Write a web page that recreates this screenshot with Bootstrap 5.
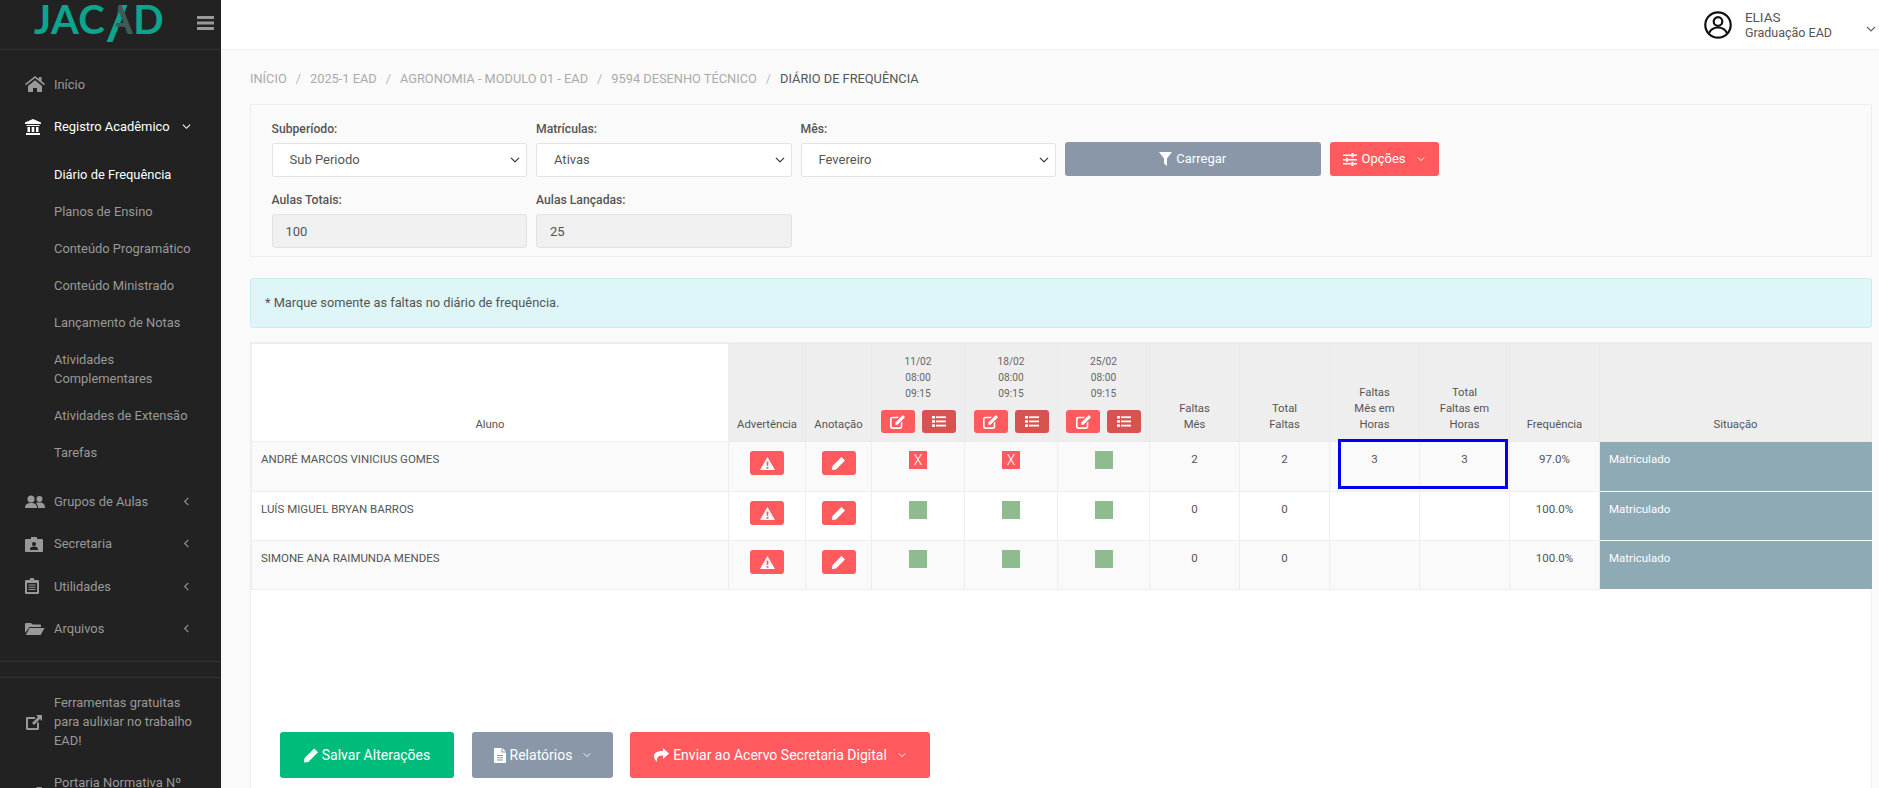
<!DOCTYPE html>
<html lang="pt-BR"><head><meta charset="utf-8"><title>Diário de Frequência</title>
<link href="https://cdn.jsdelivr.net/npm/bootstrap@5.3.0/dist/css/bootstrap.min.css" rel="stylesheet">
<style>
html,body{height:100%;overflow:hidden}
body{font-family:Roboto,"Liberation Sans",sans-serif;font-size:13px;color:#555;background:#fafafa}
.shell{height:788px;overflow:hidden}
.side{width:221px;flex:none;background:#222;color:#999;overflow:hidden;height:788px}
.side>*{flex:none}
.brand{height:50px;border-bottom:1px solid #333;position:relative}
.logo{position:absolute;left:34px;top:0;font-family:Lato,Roboto,sans-serif;font-weight:700;font-size:40px;line-height:38px;letter-spacing:.3px;color:#0aa58c;white-space:nowrap}
.logo-a{position:relative;display:inline-block}
.logo-glyph{color:#3f5a58;display:inline-block;clip-path:polygon(50% 0,100% 0,100% 100%,32% 100%)}
.logo-a::before{content:"";position:absolute;left:9px;top:5px;width:6px;height:37px;background:#0aa58c;transform:skewX(-22deg)}
.burger{position:absolute;left:197px;top:16px}
.menu-list{list-style:none;margin:0;padding:0}
.menu-main{padding-top:13px}
.mi{display:flex;align-items:center;height:37px;padding-left:25px;padding-right:10px;color:#999;white-space:nowrap;font-size:12.9px}
.mi.tall{height:42.4px}
.mi .ic{width:20px;height:16px;margin-right:9px;flex:none;fill:currentColor}
.mi .lbl{flex:1}
.mi.open{color:#fff;height:43px;margin-bottom:8px}
.sub{padding:0;margin:0 0 9px;list-style:none;font-size:12.9px}
.sub li{padding:9px 15px 9px 54px;line-height:19px;color:#999}
.sub li.now{color:#fff}
.chev{width:9px;height:9px;stroke:currentColor;fill:none;stroke-width:1.2;flex:none;margin-right:20px}
.side-hr{border-top:1px solid #333;height:16px;margin-top:11px}
.side-hr+.side-hr{margin-top:0}
.side-ext{padding:0 0 0 25px;display:flex;align-items:flex-start;color:#999;line-height:19px;margin-bottom:23px;font-size:12.9px}
.side-ext .ic{width:18px;height:18px;margin-right:11px;margin-top:20px;flex:none;fill:currentColor}
.side-ext .ic.ic-low{margin-top:12px}
.mainp{flex:1;min-width:0;height:788px;overflow:hidden}
.topb{height:50px;background:#fff;border-bottom:1px solid #eee;flex:none}
.usr{width:28px;height:28px;margin-right:13px}
.usr-n{line-height:16px;color:#555;font-size:13.5px}
.usr-n small{display:block;font-size:12.5px}
.topchev{width:10px;height:10px;stroke:#666;fill:none;stroke-width:1.2;margin-left:34px;margin-top:8px}
.topgap{width:3px}
.wrapc{padding:0 7px 0 29px}
.crumbs{height:54px;font-size:12.8px;color:#aaa;margin:0;padding:4px 0 0;align-items:center;--bs-breadcrumb-divider-color:#bbb;--bs-breadcrumb-item-active-color:#555;--bs-breadcrumb-margin-bottom:0;--bs-breadcrumb-item-padding-x:9px}
.crumbs .breadcrumb-item+.breadcrumb-item::before{color:#bbb}
.filter{background:#fafafa;border:1px solid #eee;padding:15px 16px 8px 16px;height:153px}
.frow{--bs-gutter-x:9px;--bs-gutter-y:0;margin-left:0}
.frow>div{width:264.5px;padding:0 4.5px}
.flab{font-size:12.2px;font-weight:500;color:#555;line-height:18px;margin-bottom:5px;display:block}
.fsel{height:34px;font-size:13px;color:#555;padding:0 26px 0 17px;border-color:#e3e3e3;border-radius:3px;background-size:12px 10px;background-position:right 5px center}
.finp{height:34px;font-size:13px;color:#555;padding:0 13px;border-color:#e3e3e3;border-radius:3px;background:#f0f0f0!important}
.r2{margin-top:14px}
.bt{display:inline-flex;align-items:center;justify-content:center;border:0;border-radius:3px;color:#fff;gap:4px;font-size:13px;padding:0;--bs-btn-color:#fff;--bs-btn-hover-color:#fff}
.bt svg.g{fill:#fff;flex:none}
.bt .c2{width:8px;height:8px;stroke:#fff;fill:none;stroke-width:1.2;margin-left:7px}
.b-red{background:#ff5b5f}.b-gray{background:#8a97a8}.b-grn{background:#00bc7a}.b-drk{background:#d85350}
.b-load{width:256px;height:34px;margin-bottom:1px}
.b-opt{width:109px;height:34px;margin-bottom:1px}
.note{height:50px;margin:21px 0 14px;padding:0 12px 0 14px;background:#dff6f8;border:1px solid #c8ecef;border-radius:3px;color:#555;display:flex;align-items:center;font-size:12.8px}
.tbox{background:#fff;border:1px solid #eee;border-bottom:0;height:446px;position:relative;width:1622px}
.dia{table-layout:fixed;width:1621px;border-collapse:collapse;font-size:12px;color:#555;margin:0}
.dia th,.dia td{border:1px solid #eee;font-weight:400}
.dia thead th{background:#eee;vertical-align:bottom;text-align:center;padding:0 4px 8px;line-height:16px;border-color:#e9e9e9;font-size:11.3px}
.dia thead th.wh{background:#fff;border-color:#eee}
.dia thead tr{height:98px}
.dia tbody td{vertical-align:top;padding:9px 9px 0;line-height:16px;text-align:center;font-size:11.5px}
.dia tbody td.nm{text-align:left}
.dia tbody tr:nth-child(odd) td{background:#fafafa}
.dia tbody tr:nth-child(1){height:50px}.dia tbody tr:nth-child(n+2){height:49px}
.dia tbody td.st,.dia tbody tr:nth-child(odd) td.st{background:#8daab5;color:#fff;text-align:left;border-color:#fff #8daab5}
.dts{font-size:10.2px;font-weight:400;color:#666;display:block;margin-bottom:8px}
.bts{display:flex;justify-content:center;gap:7px}
.sm1{width:34px;height:23px}
.rb{width:34px;height:24px}
.bx{display:inline-block;width:18px;height:18px;background:#8fbc8f;vertical-align:top}
.bx.f{background:#ff5b5f;color:#fff;line-height:18px;font-size:14px;font-weight:300}
.rel{position:relative}
.mark-blue{position:absolute;left:8px;top:-3px;width:170px;height:50px;border:3px solid #0000f0;pointer-events:none;z-index:2}
.foot{padding:142px 0 0 29px;gap:14px;display:flex}
.foot .bt{height:46px;font-size:14px;gap:4px}
.b-sv{width:174px}.b-rl{width:141px;margin-left:4px}.b-en{width:300px;margin-left:3px}
</style></head><body>
<div class="d-flex shell">
<aside class="side d-flex flex-column">
 <div class="brand">
  <div class="logo">JAC<span class="logo-a"><span class="logo-glyph">A</span></span>D</div>
  <svg class="burger" width="17" height="14" viewBox="0 0 17 14" fill="#999"><rect width="17" height="3"/><rect y="5.5" width="17" height="3"/><rect y="11" width="17" height="3"/></svg>
 </div>
 <ul class="menu-list menu-main">
  <li class="mi tall"><svg class="ic" viewBox="0 0 20 16"><path d="M10 0 0 8l1 1.300 9-7.300 9 7.300 1-1.300-3.500-2.900V1h-2.500v2L10 0zM3 10v6h5v-4h4v4h5v-6l-7-5.700z"/></svg><span class="lbl">Início</span></li>
  <li class="mi open"><svg class="ic" viewBox="0 0 20 16"><path d="M8 0 0 3.500V5h16V3.500zM1.500 6h13v1h-13zM2.500 8H5v5H2.500zM6.700 8h2.600v5H6.700zM11 8h2.500v5H11zM1 14h14v2H1z"/></svg><span class="lbl">Registro Acadêmico</span><svg class="chev" viewBox="0 0 10 10"><path d="M1 3l4 4 4-4"/></svg></li>
 </ul>
 <ul class="sub">
  <li class="now">Diário de Frequência</li><li>Planos de Ensino</li><li>Conteúdo Programático</li><li>Conteúdo Ministrado</li><li>Lançamento de Notas</li><li>Atividades Complementares</li><li>Atividades de Extensão</li><li>Tarefas</li>
 </ul>
 <ul class="menu-list">
  <li class="mi tall"><svg class="ic" viewBox="0 0 20 16"><circle cx="6" cy="5" r="3.500"/><circle cx="14.500" cy="5" r="3"/><path d="M0 14c0-3.500 2-5 6-5s6 1.500 6 5zM13 14c0-2-.5-3.500-2-5 1-.5 2-.5 3.500-.5 3.500 0 5.500 1.500 5.500 5.500z"/></svg><span class="lbl">Grupos de Aulas</span><svg class="chev" viewBox="0 0 10 10"><path d="M7 1 3 5l4 4"/></svg></li>
  <li class="mi tall"><svg class="ic" viewBox="0 0 20 16"><path fill-rule="evenodd" d="M1 3h5V1h6v2h5a1 1 0 0 1 1 1v11a1 1 0 0 1-1 1H1a1 1 0 0 1-1-1V4a1 1 0 0 1 1-1zm8 3a2 2 0 1 0 0 4 2 2 0 0 0 0-4zM5 14h8v-1c0-1.500-1.500-2.500-4-2.500S5 11.500 5 13z"/></svg><span class="lbl">Secretaria</span><svg class="chev" viewBox="0 0 10 10"><path d="M7 1 3 5l4 4"/></svg></li>
  <li class="mi tall"><svg class="ic" viewBox="0 0 20 16"><path fill-rule="evenodd" d="M1 2h3.500L5.500 0h3l1 2H13a1 1 0 0 1 1 1v12a1 1 0 0 1-1 1H1a1 1 0 0 1-1-1V3a1 1 0 0 1 1-1zm1 3v9h10V5zm1.500 1.500h7v1h-7zm0 2.300h7v1h-7zm0 2.300h7v1h-7z"/></svg><span class="lbl">Utilidades</span><svg class="chev" viewBox="0 0 10 10"><path d="M7 1 3 5l4 4"/></svg></li>
  <li class="mi tall"><svg class="ic" viewBox="0 0 20 16"><path d="M0 3a1 1 0 0 1 1-1h5l1.500 1.500H15a1 1 0 0 1 1 1V6H4.500L0 12zM4.500 7H19.500l-3.800 7H.8z"/></svg><span class="lbl">Arquivos</span><svg class="chev" viewBox="0 0 10 10"><path d="M7 1 3 5l4 4"/></svg></li>
 </ul>
 <div class="side-hr"></div><div class="side-hr"></div>
 <div class="side-ext"><svg class="ic" viewBox="0 0 18 18"><path d="M2 4h8v2H3v9h9V9.500h2V15.500a1.500 1.500 0 0 1-1.500 1.500h-10A1.500 1.500 0 0 1 1 15.500v-10A1.500 1.500 0 0 1 2 4zM11 2h6v6l-2-2-6 6-2-2 6-6z"/></svg><span>Ferramentas gratuitas<br>para aulixiar no trabalho<br>EAD!</span></div>
 <div class="side-ext"><svg class="ic ic-low" viewBox="0 0 18 18"><path d="M2 4h8v2H3v9h9V9.500h2V15.500a1.500 1.500 0 0 1-1.500 1.500h-10A1.500 1.500 0 0 1 1 15.500v-10A1.500 1.500 0 0 1 2 4zM11 2h6v6l-2-2-6 6-2-2 6-6z"/></svg><span>Portaria Normativa Nº</span></div>
</aside>
<main class="mainp d-flex flex-column">
 <header class="topb d-flex align-items-center justify-content-end">
  <svg class="usr" viewBox="0 0 28 28" fill="none" stroke="#111" stroke-width="2.200"><circle cx="14" cy="14" r="12.700"/><circle cx="14" cy="10.500" r="4.300"/><path d="M5 22c2-4 5-5.500 9-5.500s7 1.500 9 5.500"/></svg>
  <div class="usr-n">ELIAS<small>Graduação EAD</small></div>
  <svg class="topchev" viewBox="0 0 10 10"><path d="M1 3l4 4 4-4"/></svg>
  <span class="topgap"></span>
 </header>
 <div class="wrapc">
  <ol class="breadcrumb crumbs"><li class="breadcrumb-item">INÍCIO</li><li class="breadcrumb-item">2025-1 EAD</li><li class="breadcrumb-item">AGRONOMIA - MODULO 01 - EAD</li><li class="breadcrumb-item">9594 DESENHO TÉCNICO</li><li class="breadcrumb-item active">DIÁRIO DE FREQUÊNCIA</li></ol>
  <section class="filter">
   <div class="row frow">
    <div><label class="flab">Subperíodo:</label><select class="form-select fsel"><option>Sub Periodo</option></select></div>
    <div><label class="flab">Matrículas:</label><select class="form-select fsel"><option>Ativas</option></select></div>
    <div><label class="flab">Mês:</label><select class="form-select fsel"><option>Fevereiro</option></select></div>
    <div class="d-flex align-items-end"><button class="btn bt b-gray b-load"><svg class="g" width="13" height="14" viewBox="0 0 13 14"><path d="M0 0h13L8 6.500V14L5 11.500V6.500z"/></svg>Carregar</button></div>
    <div class="d-flex align-items-end"><button class="btn bt b-red b-opt"><svg class="g" width="14" height="13" viewBox="0 0 14 13"><path d="M0 1.500h8.500V0h2v1.500H14v1.500h-3.500v1.500h-2V3H0zM0 6h3V4.800h2V6h9v1.500H5v1.300H3V7.500H0zM0 10h8.500V8.800h2V10H14v1.500h-3.500V13h-2v-1.500H0z"/></svg>Opções<svg class="c2" viewBox="0 0 10 10"><path d="M1 3l4 4 4-4"/></svg></button></div>
   </div>
   <div class="row frow r2">
    <div><label class="flab">Aulas Totais:</label><input class="form-control finp" value="100" disabled></div>
    <div><label class="flab">Aulas Lançadas:</label><input class="form-control finp" value="25" disabled></div>
   </div>
  </section>
  <div class="note">* Marque somente as faltas no diário de frequência.</div>
  <div class="tbox">
   <table class="dia">
    <colgroup><col style="width:477px"><col style="width:77px"><col style="width:66px"><col style="width:93px"><col style="width:93px"><col style="width:92px"><col style="width:90px"><col style="width:90px"><col style="width:90px"><col style="width:90px"><col style="width:90px"><col></colgroup>
    <thead><tr>
     <th class="wh">Aluno</th><th>Advertência</th><th>Anotação</th>
     <th><span class="dts">11/02<br>08:00<br>09:15</span><div class="bts"><button class="btn bt b-red sm1"><svg class="g" width="15" height="14" viewBox="0 0 14 13"><path d="M2 1.500h6.500L7 3H2.500a1 1 0 0 0-1 1v6.500a1 1 0 0 0 1 1H9a1 1 0 0 0 1-1V7.500l1.500-1.500v5A2 2 0 0 1 9.500 13H2a2 2 0 0 1-2-2V3.500a2 2 0 0 1 2-2zM12 0l2 2-7 7H5V7z"/></svg></button><button class="btn bt b-drk sm1"><svg class="g" width="14" height="11" viewBox="0 0 14 11"><rect width="3" height="2.500"/><rect x="4" y=".3" width="10" height="1.800"/><rect y="4.200" width="3" height="2.500"/><rect x="4" y="4.500" width="10" height="1.800"/><rect y="8.400" width="3" height="2.500"/><rect x="4" y="8.700" width="10" height="1.800"/></svg></button></div></th>
     <th><span class="dts">18/02<br>08:00<br>09:15</span><div class="bts"><button class="btn bt b-red sm1"><svg class="g" width="15" height="14" viewBox="0 0 14 13"><path d="M2 1.500h6.500L7 3H2.500a1 1 0 0 0-1 1v6.500a1 1 0 0 0 1 1H9a1 1 0 0 0 1-1V7.500l1.500-1.500v5A2 2 0 0 1 9.500 13H2a2 2 0 0 1-2-2V3.500a2 2 0 0 1 2-2zM12 0l2 2-7 7H5V7z"/></svg></button><button class="btn bt b-drk sm1"><svg class="g" width="14" height="11" viewBox="0 0 14 11"><rect width="3" height="2.500"/><rect x="4" y=".3" width="10" height="1.800"/><rect y="4.200" width="3" height="2.500"/><rect x="4" y="4.500" width="10" height="1.800"/><rect y="8.400" width="3" height="2.500"/><rect x="4" y="8.700" width="10" height="1.800"/></svg></button></div></th>
     <th><span class="dts">25/02<br>08:00<br>09:15</span><div class="bts"><button class="btn bt b-red sm1"><svg class="g" width="15" height="14" viewBox="0 0 14 13"><path d="M2 1.500h6.500L7 3H2.500a1 1 0 0 0-1 1v6.500a1 1 0 0 0 1 1H9a1 1 0 0 0 1-1V7.500l1.500-1.500v5A2 2 0 0 1 9.500 13H2a2 2 0 0 1-2-2V3.500a2 2 0 0 1 2-2zM12 0l2 2-7 7H5V7z"/></svg></button><button class="btn bt b-drk sm1"><svg class="g" width="14" height="11" viewBox="0 0 14 11"><rect width="3" height="2.500"/><rect x="4" y=".3" width="10" height="1.800"/><rect y="4.200" width="3" height="2.500"/><rect x="4" y="4.500" width="10" height="1.800"/><rect y="8.400" width="3" height="2.500"/><rect x="4" y="8.700" width="10" height="1.800"/></svg></button></div></th>
     <th>Faltas<br>Mês</th><th>Total<br>Faltas</th><th>Faltas<br>Mês em<br>Horas</th><th>Total<br>Faltas em<br>Horas</th><th>Frequência</th><th>Situação</th>
    </tr></thead>
    <tbody>
     <tr><td class="nm">ANDRÉ MARCOS VINICIUS GOMES</td>
      <td><button class="btn bt b-red rb"><svg class="g" width="15" height="13" viewBox="0 0 15 13"><path fill-rule="evenodd" d="M7.500 0 15 13H0zM6.500 4.500l.3 4.500h1.400l.3-4.500zM6.500 10v1.800h2V10z"/></svg></button></td>
      <td><button class="btn bt b-red rb"><svg class="g" width="13" height="13" viewBox="0 0 13 13"><path d="M9.500 0 13 3.500 4 12.500 0 13l.5-4z"/></svg></button></td>
      <td><span class="bx f">X</span></td><td><span class="bx f">X</span></td><td><span class="bx"></span></td>
      <td>2</td><td>2</td><td class="rel">3<div class="mark-blue"></div></td><td>3</td><td>97.0%</td><td class="st">Matriculado</td></tr>
     <tr><td class="nm">LUÍS MIGUEL BRYAN BARROS</td>
      <td><button class="btn bt b-red rb"><svg class="g" width="15" height="13" viewBox="0 0 15 13"><path fill-rule="evenodd" d="M7.500 0 15 13H0zM6.500 4.500l.3 4.500h1.400l.3-4.500zM6.500 10v1.800h2V10z"/></svg></button></td>
      <td><button class="btn bt b-red rb"><svg class="g" width="13" height="13" viewBox="0 0 13 13"><path d="M9.500 0 13 3.500 4 12.500 0 13l.5-4z"/></svg></button></td>
      <td><span class="bx"></span></td><td><span class="bx"></span></td><td><span class="bx"></span></td>
      <td>0</td><td>0</td><td></td><td></td><td>100.0%</td><td class="st">Matriculado</td></tr>
     <tr><td class="nm">SIMONE ANA RAIMUNDA MENDES</td>
      <td><button class="btn bt b-red rb"><svg class="g" width="15" height="13" viewBox="0 0 15 13"><path fill-rule="evenodd" d="M7.500 0 15 13H0zM6.500 4.500l.3 4.500h1.400l.3-4.500zM6.500 10v1.800h2V10z"/></svg></button></td>
      <td><button class="btn bt b-red rb"><svg class="g" width="13" height="13" viewBox="0 0 13 13"><path d="M9.500 0 13 3.500 4 12.500 0 13l.5-4z"/></svg></button></td>
      <td><span class="bx"></span></td><td><span class="bx"></span></td><td><span class="bx"></span></td>
      <td>0</td><td>0</td><td></td><td></td><td>100.0%</td><td class="st">Matriculado</td></tr>
    </tbody>
   </table>
   <div class="foot">
    <button class="btn bt b-grn b-sv"><svg class="g" width="14" height="15" viewBox="0 0 13 13"><path d="M9.500 0 13 3.500 4 12.500 0 13l.5-4z"/></svg>Salvar Alterações</button>
    <button class="btn bt b-gray b-rl"><svg class="g" width="12" height="15" viewBox="0 0 12 15"><path fill-rule="evenodd" d="M0 0h7.500v4.500H12V15H0zM8.500 0 12 3.500H8.500zM3 7v1h6V7zm0 2.200v1h6v-1zm0 2.200v1h6v-1z"/></svg>Relatórios<svg class="c2" viewBox="0 0 10 10"><path d="M1 3l4 4 4-4"/></svg></button>
    <button class="btn bt b-red b-en"><svg class="g" width="15" height="14" viewBox="0 0 15 14"><path d="M9 0l6 5.500L9 11V7.500C5 7.500 2.500 8.500 2.800 14 .5 11.500 0 9.500 0 8c0-3.500 3.500-5 9-5z"/></svg>Enviar ao Acervo Secretaria Digital<svg class="c2" viewBox="0 0 10 10"><path d="M1 3l4 4 4-4"/></svg></button>
   </div>
  </div>
 </div>
</main>
</div>
<script src="https://cdn.jsdelivr.net/npm/bootstrap@5.3.0/dist/js/bootstrap.bundle.min.js"></script>
</body></html>
